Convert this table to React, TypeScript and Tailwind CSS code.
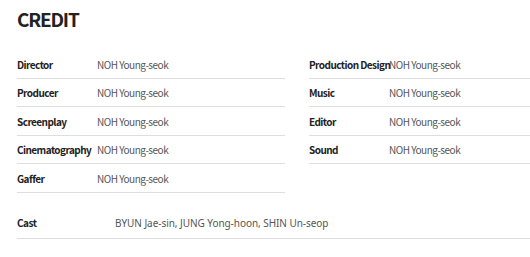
const left = [
  ["Director", "NOH Young-seok"],
  ["Producer", "NOH Young-seok"],
  ["Screenplay", "NOH Young-seok"],
  ["Cinematography", "NOH Young-seok"],
  ["Gaffer", "NOH Young-seok"],
];

const right = [
  ["Production Design", "NOH Young-seok"],
  ["Music", "NOH Young-seok"],
  ["Editor", "NOH Young-seok"],
  ["Sound", "NOH Young-seok"],
];

function Row({ label, value }: { label: string; value: string }) {
  return (
    <li className="flex items-center h-[28.5px] pt-[2px] border-b border-[#dedede]">
      <span className="w-20 shrink-0 whitespace-nowrap font-bold text-[#222] tracking-[-0.55px]">{label}</span>
      <span className="text-[#555] tracking-[-0.5px]">{value}</span>
    </li>
  );
}

export default function App() {
  return (
    <div className="w-[530px] h-[257px] overflow-hidden bg-white">
      <section
        className="w-[580px] pl-[17px] pt-[5px] text-[10px] leading-none"
        style={{ fontFamily: '"Noto Sans CJK KR", "Noto Sans", sans-serif' }}
      >
        <h2 className="text-[19px] font-bold text-[#222] leading-[28px] tracking-[-1.2px]">CREDIT</h2>

        <div className="mt-[17px] grid grid-cols-[268px_268px] gap-x-6">
          <ul>
            {left.map(([l, v]) => (
              <Row key={l} label={l} value={v} />
            ))}
          </ul>
          <ul>
            {right.map(([l, v]) => (
              <Row key={l} label={l} value={v} />
            ))}
          </ul>
        </div>

        <div className="mt-[15px] flex items-center h-[31px] border-b border-[#dedede]">
          <span className="w-[98px] shrink-0 font-bold text-[#222] tracking-[-0.5px]">Cast</span>
          <span className="text-[#555] tracking-[-0.05px]" style={{ fontFamily: '"Noto Sans", sans-serif' }}>
            BYUN Jae-sin, JUNG Yong-hoon, SHIN Un-seop
          </span>
        </div>
      </section>
    </div>
  );
}
